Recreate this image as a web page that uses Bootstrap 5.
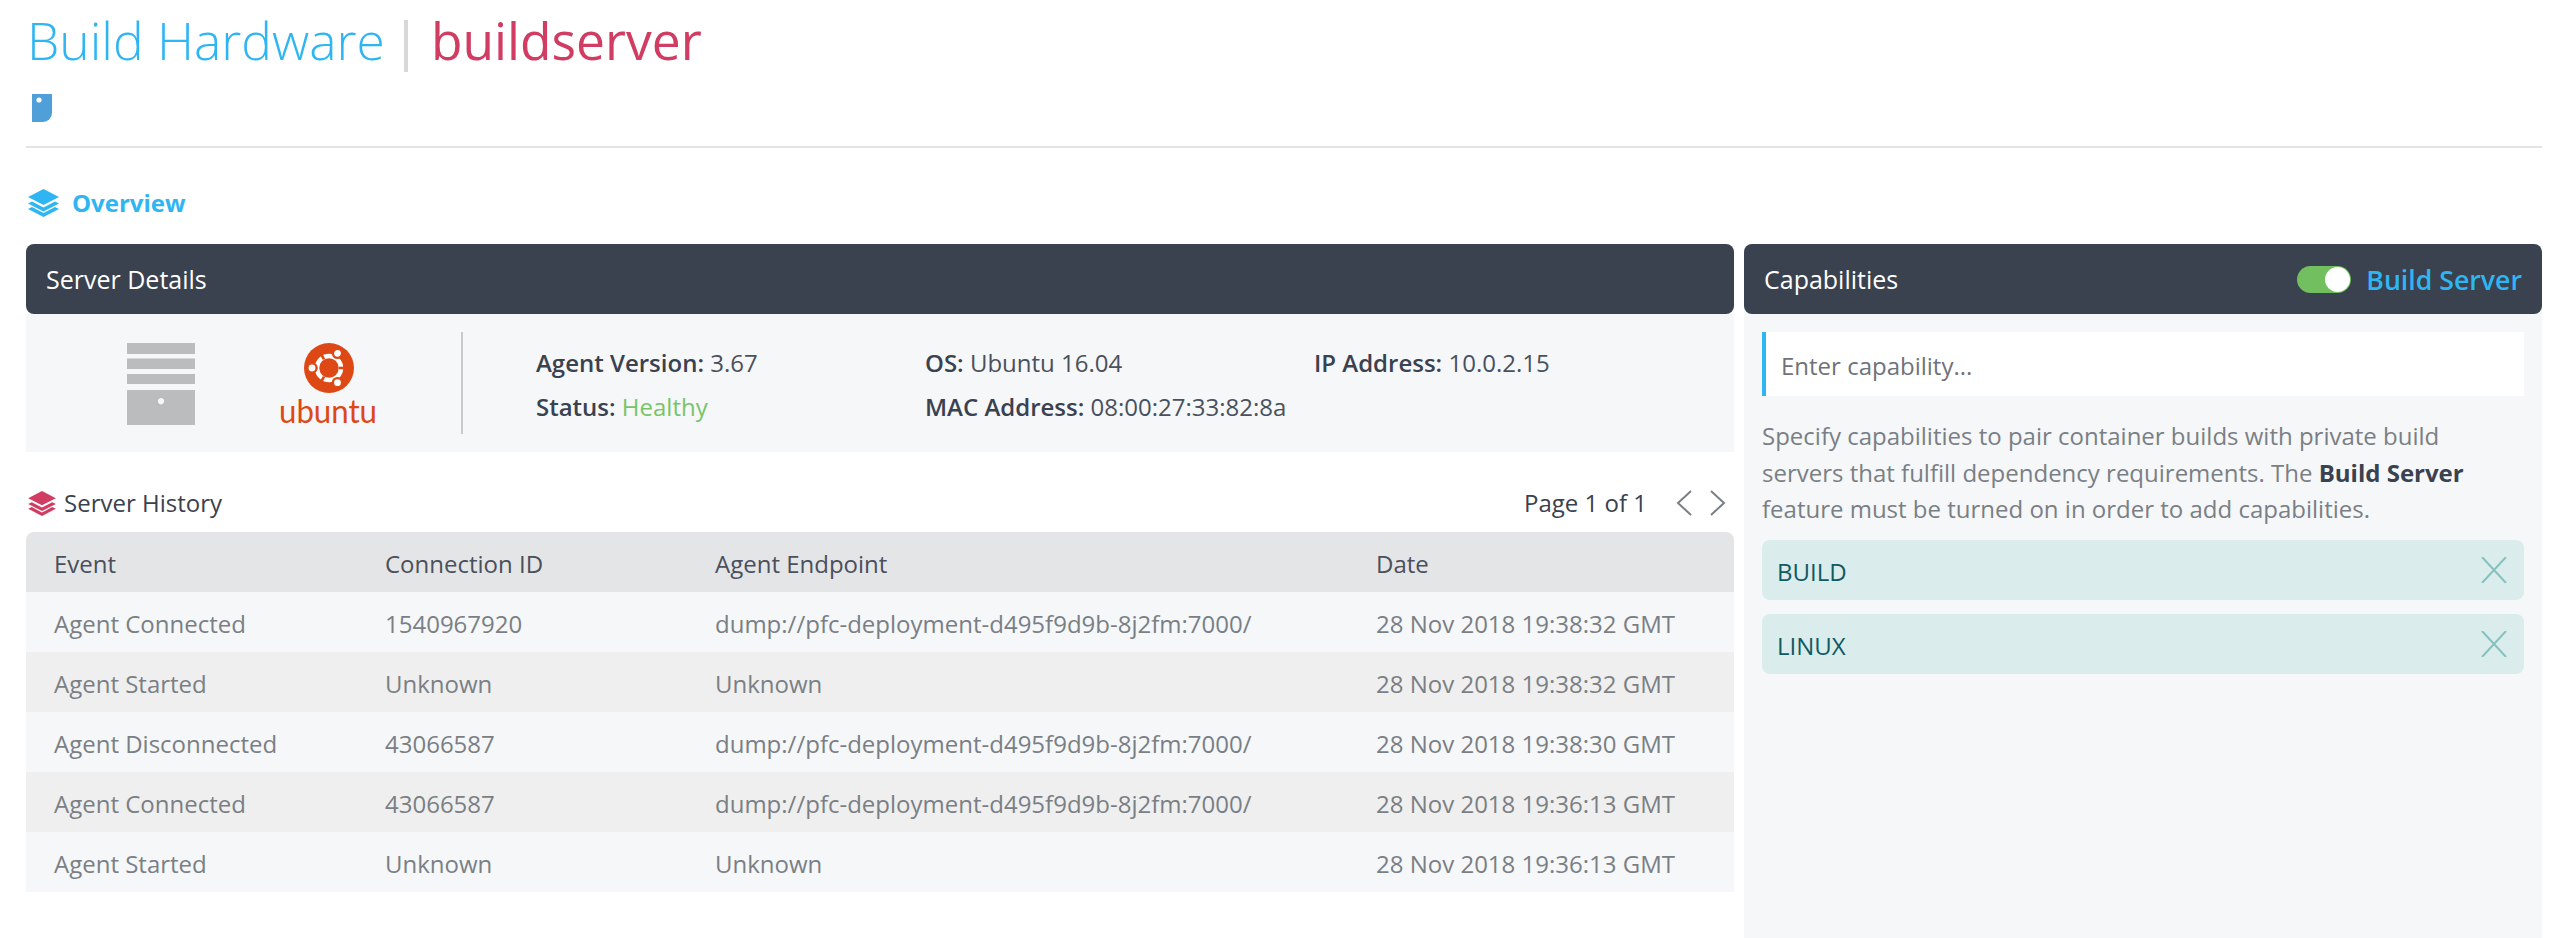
<!DOCTYPE html>
<html lang="en"><head><meta charset="utf-8"><title>Build Hardware</title>
<link href="https://cdn.jsdelivr.net/npm/bootstrap@5.3.0/dist/css/bootstrap.min.css" rel="stylesheet">
<style>
body{font-family:"Open Sans",sans-serif;font-size:24px;color:#3a414f;background:#fff}
.pg{height:938px;padding:0 18px 0 26px;display:flex;flex-direction:column}
.ttl{margin:10px 0 0;font-size:51.5px;line-height:60px;font-weight:300;color:#2fb6f2;height:60px;padding-left:1px;white-space:nowrap}
.ttl b{font-weight:400;color:#d13c63}
.ttl i{display:inline-block;width:4px;height:52px;background:#d8d8d8;vertical-align:-12px;margin:0 23px 0 19px}
.tagic{display:block;margin:24px 0 24px 6px}
.rule{height:2px;background:#e4e4e4;flex:none}
.ovw{height:96px;display:flex;align-items:center;gap:13px;padding:14px 0 0 2px;color:#2fb6f2;font-weight:700}
.cols{flex:1;display:flex;gap:10px;min-height:0}
.lft{width:1708px;flex:none}
.rgt{flex:1;background:#f5f7f9;border-radius:8px 8px 0 0}
.phead{height:70px;background:#3a414f;border-radius:8px;color:#fff;display:flex;align-items:center;padding:2px 20px 0;font-weight:500;font-size:25px}
.srv{height:138px;background:#f5f7f9;display:flex;align-items:center}
.srvic{margin:2px 0 0 101px}
.ubu{margin:18px 0 0 74px}
.vrule{width:2px;height:102px;background:#c8cacc;margin:0 73px 0 74px}
.facts{display:grid;grid-template-columns:389px 389px 1fr;line-height:44px;padding-top:3px}
.facts span{font-weight:600;color:#3a414f}
.facts div{color:#4a505c;font-weight:400;white-space:nowrap}
.ok{color:#78c568}
.hist{height:80px;display:flex;align-items:center;justify-content:space-between;padding:22px 8px 0 2px;font-weight:400}
.hist>div{display:flex;align-items:center}
.pgn{margin-right:29px}
.chr{margin-left:18px}
.c1{width:331px}.c2{width:330px}.c3{width:661px}
.tbl{table-layout:fixed;width:100%;margin:0;font-size:24px;--bs-table-bg:transparent;--bs-table-border-color:transparent;--bs-table-color:#7a7f85}
.tbl th,.tbl td{height:60px;padding:3px 0 0 28px;vertical-align:middle;border:0;white-space:nowrap;box-shadow:none}
.tbl th{font-weight:400;color:#4a505c;background:#e4e5e7}
.tbl th:first-child{border-top-left-radius:8px}
.tbl th:last-child{border-top-right-radius:8px}
.tbl td{background:#f5f7f9;color:#7a7f85}
.tbl tr.alt td{background:#efefef}
.capin{width:762px;height:64px;margin:18px 18px 0;padding:2px 0 0 15px;border:0;border-left:4px solid #2fb6f2;border-radius:0;background:#fff;font-size:24px;color:#666}
.capin::placeholder{color:#6f7378;opacity:1}
.capnote{margin:22px 18px 12px;line-height:36.6px;color:#7a7f85;white-space:nowrap}
.capnote b{font-weight:700;color:#3a414f}
.chip{height:60px;margin:0 18px 14px;background:#daecec;color:#105a62;border-radius:8px;display:flex;align-items:center;justify-content:space-between;padding:0 17px 0 15px;font-weight:500}
.chip span{padding-top:5px}
.sw{width:54px;height:27px;border-radius:14px;background:#72bf60;position:relative;margin-right:15px;display:block}
.sw::after{content:"";position:absolute;right:1px;top:1px;width:25px;height:25px;border-radius:50%;background:#fff}
.bs{color:#2fb6f2;font-weight:600;font-size:26.7px}
</style></head>
<body>
<div class="pg">
  <h1 class="ttl">Build Hardware<i></i><b>buildserver</b></h1>
  <svg class="tagic" width="20" height="28" viewBox="0 0 20 28"><path d="M0 0H20V19A9 9 0 0 1 11 28H0Z" fill="#4f9fd8"/><circle cx="7" cy="6" r="2.6" fill="#fff"/></svg>
  <div class="rule"></div>
  <div class="ovw">
    <svg width="31" height="28" viewBox="0 0 31 28" fill="#2fb6f2"><path d="M15.5 0 31 8 15.5 16 0 8Z"/><path d="M4 12.5 15.5 18.5 27 12.5 31 14.5 15.5 22.5 0 14.5Z"/><path d="M4 18 15.5 24 27 18 31 20 15.5 28 0 20Z"/></svg>
    <span>Overview</span>
  </div>
  <div class="cols">
    <div class="lft">
      <div class="phead">Server Details</div>
      <div class="srv">
        <svg class="srvic" width="68" height="82" viewBox="0 0 68 82" fill="#bbbcbe"><rect width="68" height="11"/><rect y="15.5" width="68" height="10.5"/><rect y="31" width="68" height="10"/><path fill-rule="evenodd" d="M0 47H68V82H0ZM34 55a3.2 3.2 0 1 0 .01 0Z"/></svg>
        <svg class="ubu" width="118" height="98" viewBox="-10 0 118 98"><circle cx="50" cy="25" r="25" fill="#dd4814"/><circle cx="50" cy="25" r="12" fill="none" stroke="#fff" stroke-width="4.5"/><g stroke="#dd4814" stroke-width="2.6"><path d="M60 25H66"/><path d="M45 16.3 42 11"/><path d="M45 33.7 42 39"/></g><g fill="#fff" stroke="#dd4814" stroke-width="2.4"><circle cx="33" cy="25" r="4.6"/><circle cx="58.5" cy="10.3" r="4.6"/><circle cx="58.5" cy="39.7" r="4.6"/></g><text x="49" y="80" text-anchor="middle" textLength="98" lengthAdjust="spacingAndGlyphs" font-family="Lato,sans-serif" font-size="33" font-weight="400" fill="#dd4814">ubuntu</text></svg>
        <div class="vrule"></div>
        <div class="facts">
          <div><span>Agent Version:</span> 3.67</div>
          <div><span>OS:</span> Ubuntu 16.04</div>
          <div><span>IP Address:</span> 10.0.2.15</div>
          <div><span>Status:</span> <em class="ok fst-normal">Healthy</em></div>
          <div><span>MAC Address:</span> 08:00:27:33:82:8a</div>
        </div>
      </div>
      <div class="hist">
        <div class="gap-2">
          <svg width="28" height="25" viewBox="0 0 31 28" fill="#d13c63"><path d="M15.5 0 31 8 15.5 16 0 8Z"/><path d="M4 12.5 15.5 18.5 27 12.5 31 14.5 15.5 22.5 0 14.5Z"/><path d="M4 18 15.5 24 27 18 31 20 15.5 28 0 20Z"/></svg>
          <span>Server History</span>
        </div>
        <div>
          <span class="pgn">Page 1 of 1</span>
          <svg class="chl" width="16" height="26" viewBox="0 0 16 26" fill="none" stroke="#7a7f85" stroke-width="2"><path d="M15 1 2 13 15 25"/></svg>
          <svg class="chr" width="16" height="26" viewBox="0 0 16 26" fill="none" stroke="#7a7f85" stroke-width="2"><path d="M1 1 14 13 1 25"/></svg>
        </div>
      </div>
      <table class="table tbl">
        <colgroup><col class="c1"><col class="c2"><col class="c3"><col></colgroup>
        <thead><tr><th>Event</th><th>Connection ID</th><th>Agent Endpoint</th><th>Date</th></tr></thead>
        <tbody>
          <tr><td>Agent Connected</td><td>1540967920</td><td>dump://pfc-deployment-d495f9d9b-8j2fm:7000/</td><td>28 Nov 2018 19:38:32 GMT</td></tr>
          <tr class="alt"><td>Agent Started</td><td>Unknown</td><td>Unknown</td><td>28 Nov 2018 19:38:32 GMT</td></tr>
          <tr><td>Agent Disconnected</td><td>43066587</td><td>dump://pfc-deployment-d495f9d9b-8j2fm:7000/</td><td>28 Nov 2018 19:38:30 GMT</td></tr>
          <tr class="alt"><td>Agent Connected</td><td>43066587</td><td>dump://pfc-deployment-d495f9d9b-8j2fm:7000/</td><td>28 Nov 2018 19:36:13 GMT</td></tr>
          <tr><td>Agent Started</td><td>Unknown</td><td>Unknown</td><td>28 Nov 2018 19:36:13 GMT</td></tr>
        </tbody>
      </table>
    </div>
    <div class="rgt">
      <div class="phead justify-content-between"><span>Capabilities</span><div class="d-flex align-items-center"><span class="sw"></span><span class="bs">Build Server</span></div></div>
      <input class="form-control capin" type="text" placeholder="Enter capability...">
      <p class="capnote">Specify capabilities to pair container builds with private build<br>servers that fulfill dependency requirements. The <b>Build Server</b><br>feature must be turned on in order to add capabilities.</p>
      <div class="chip"><span>BUILD</span><svg width="26" height="26" viewBox="0 0 26 26" stroke="#85c1bf" stroke-width="2" fill="none"><path d="M1 0 25 26M25 0 1 26"/></svg></div>
      <div class="chip"><span>LINUX</span><svg width="26" height="26" viewBox="0 0 26 26" stroke="#85c1bf" stroke-width="2" fill="none"><path d="M1 0 25 26M25 0 1 26"/></svg></div>
    </div>
  </div>
</div>
<script src="https://cdn.jsdelivr.net/npm/bootstrap@5.3.0/dist/js/bootstrap.bundle.min.js"></script>
</body></html>
